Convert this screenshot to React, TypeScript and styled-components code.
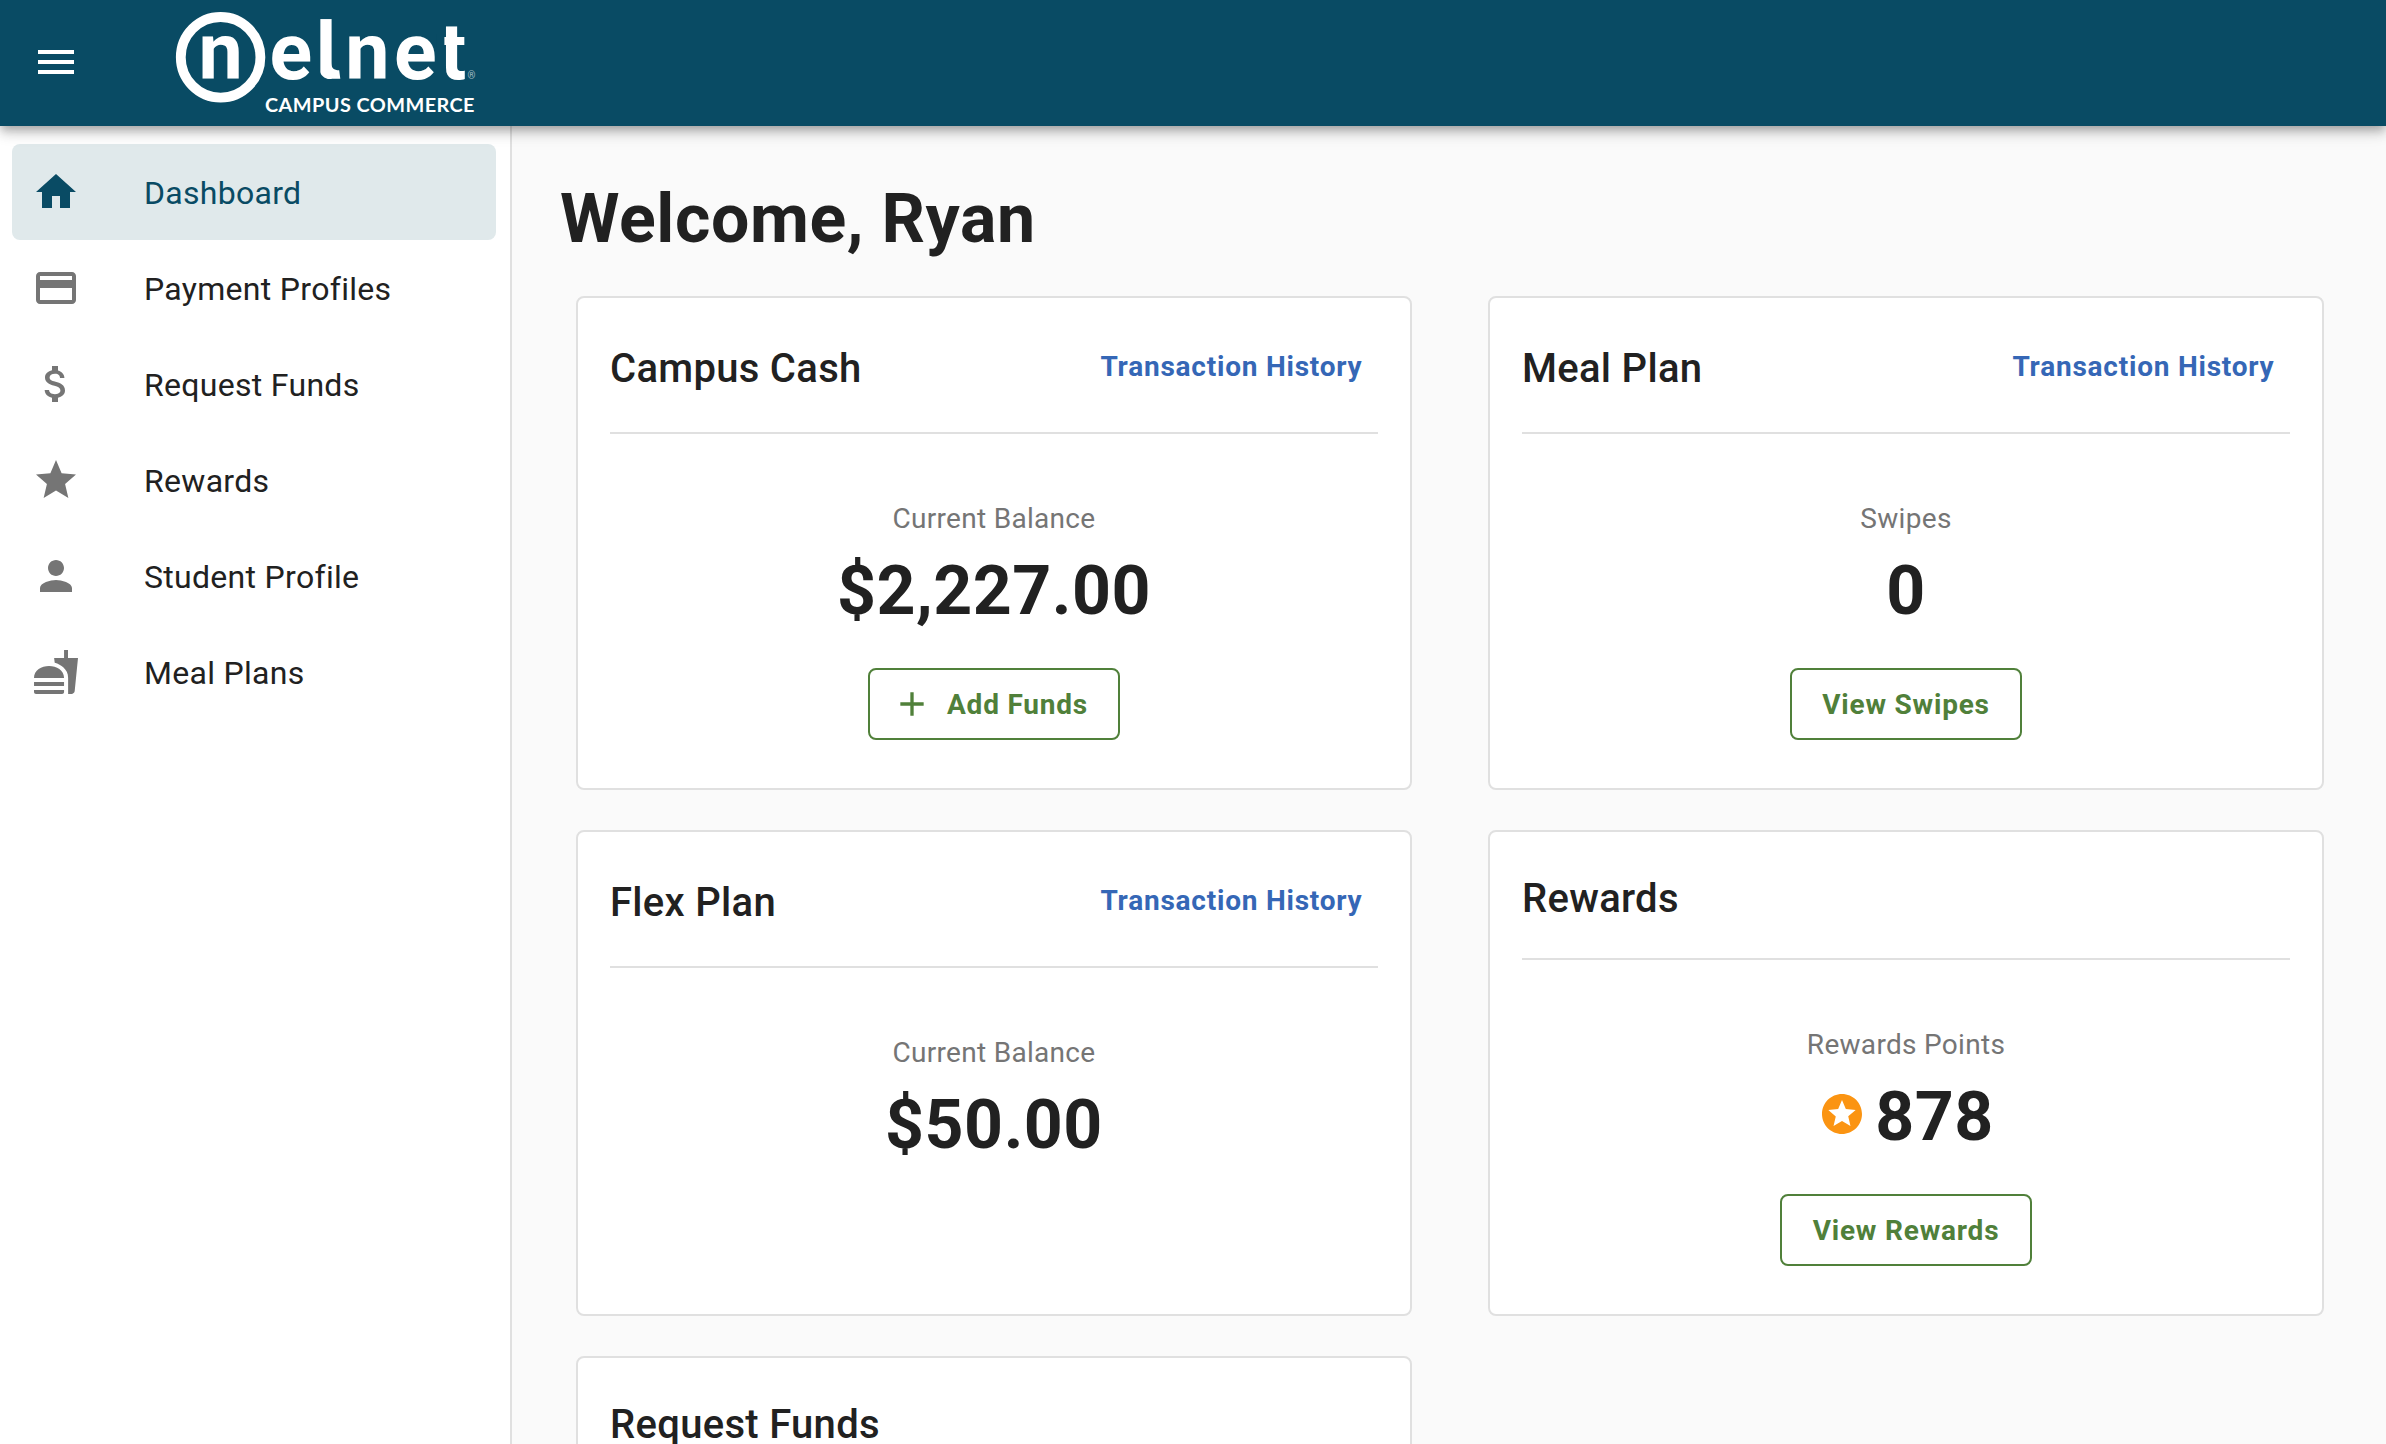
import React from 'react';
import styled, { createGlobalStyle, css } from 'styled-components';
import {
  MdAdd,
  MdAttachMoney,
  MdFastfood,
  MdHome,
  MdMenu,
  MdPayment,
  MdPerson,
  MdStar,
  MdStars,
} from 'react-icons/md';
import type { IconType } from 'react-icons';

const color = {
  brand: '#094b64',
  selected: '#e0e9eb',
  text: '#212121',
  muted: '#757575',
  line: '#e0e0e0',
  page: '#fafafa',
  green: '#50803a',
  blue: '#3567b6',
  orange: '#fb9412',
};

const GlobalStyle = createGlobalStyle`
  *, *::before, *::after { box-sizing: border-box; }
  body {
    margin: 0;
    background: ${color.page};
    color: ${color.text};
    font-family: Roboto, "Liberation Sans", sans-serif;
    -webkit-font-smoothing: antialiased;
  }
  h1, h2, p { margin: 0; }
`;

const Shell = styled.div`
  display: flex;
  flex-direction: column;
  height: 1444px;
  overflow: hidden;
`;

const AppBar = styled.header`
  position: relative;
  z-index: 1;
  flex: none;
  display: flex;
  align-items: flex-start;
  height: 126px;
  padding-left: 32px;
  background: ${color.brand};
  color: #fff;
  box-shadow: 0 4px 8px -2px rgba(0, 0, 0, 0.2), 0 8px 10px rgba(0, 0, 0, 0.14),
    0 2px 20px rgba(0, 0, 0, 0.12);
`;

const MenuButton = styled.button`
  display: flex;
  margin: 38px 84px 0 0;
  padding: 0;
  border: 0;
  background: none;
  color: inherit;
  font-size: 48px;
`;

const Logo = styled.svg`
  display: block;
  width: 340px;
  height: 126px;
  fill: #fff;
`;

const Wordmark = styled.text`
  font: 700 79px Roboto, "Liberation Sans", sans-serif;
`;

const Division = styled.text`
  font: 700 18.4px Lato, "Liberation Sans", sans-serif;
`;

const Registered = styled.text`
  font: 400 10px Roboto, "Liberation Sans", sans-serif;
  opacity: 0.6;
`;

const Body = styled.div`
  flex: 1;
  display: flex;
  min-height: 0;
`;

const Sidebar = styled.nav`
  flex: none;
  width: 512px;
  padding: 18px 14px 0 12px;
  border-right: 2px solid ${color.line};
  background: #fff;
`;

const NavItem = styled.a<{ $active?: boolean }>`
  display: flex;
  align-items: center;
  gap: 64px;
  height: 96px;
  padding-left: 20px;
  border-radius: 8px;
  ${({ $active }) =>
    $active &&
    css`
      background: ${color.selected};
      color: ${color.brand};
    `}
`;

const NavIcon = styled.span<{ $active?: boolean }>`
  display: flex;
  font-size: 48px;
  color: ${({ $active }) => ($active ? color.brand : color.muted)};
`;

const NavLabel = styled.span`
  padding-top: 2px;
  font-size: 32px;
  line-height: 48px;
  letter-spacing: 0.3px;
`;

const Main = styled.main`
  flex: 1;
  padding: 51px 62px 0 48px;
`;

const Heading = styled.h1`
  height: 119px;
  font-size: 68px;
  font-weight: 700;
  line-height: 84px;
  letter-spacing: 0.58px;
`;

const Cards = styled.div`
  display: grid;
  grid-template-columns: 836px 836px;
  grid-template-rows: 494px 486px 494px;
  column-gap: 76px;
  row-gap: 40px;
  margin-left: 16px;
`;

const Card = styled.section`
  padding: 0 32px;
  border: 2px solid ${color.line};
  border-radius: 8px;
  background: #fff;
`;

const CardHeader = styled.div<{ $tall: boolean }>`
  display: flex;
  justify-content: space-between;
  align-items: flex-start;
  height: ${({ $tall }) => ($tall ? 136 : 128)}px;
  padding-top: ${({ $tall }) => ($tall ? 39 : 35)}px;
  border-bottom: 2px solid ${color.line};
`;

const CardTitle = styled.h2`
  font-size: 40px;
  font-weight: 500;
  line-height: 64px;
  letter-spacing: 0.3px;
`;

const LinkButton = styled.a`
  margin-top: 6px;
  padding-right: 15.5px;
  color: ${color.blue};
  font-size: 28px;
  font-weight: 700;
  line-height: 48px;
  letter-spacing: 0.78px;
`;

const CardBody = styled.div`
  display: flex;
  flex-direction: column;
  align-items: center;
  padding-top: 65px;
`;

const Label = styled.p`
  color: ${color.muted};
  font-size: 28px;
  line-height: 40px;
  letter-spacing: 0.3px;
`;

const Amount = styled.p`
  display: flex;
  align-items: center;
  gap: 9px;
  margin: 12px 0 37px;
  font-size: 68px;
  font-weight: 700;
  line-height: 80px;
  letter-spacing: 0.5px;
`;

const PointsIcon = styled(MdStars)`
  margin-bottom: 6px;
  font-size: 48px;
  color: ${color.orange};
`;

const OutlinedButton = styled.button<{ $width: number }>`
  display: flex;
  align-items: center;
  justify-content: center;
  gap: 15px;
  width: ${({ $width }) => $width}px;
  height: 72px;
  padding: 2px 0 0;
  border: 2px solid ${color.green};
  border-radius: 8px;
  background: none;
  color: ${color.green};
  font: 700 28px/48px Roboto, "Liberation Sans", sans-serif;
  letter-spacing: 0.8px;
  white-space: nowrap;
`;

const AddIcon = styled(MdAdd)`
  margin: -2px 0 0 -8px;
  font-size: 40px;
`;

type NavEntry = { label: string; icon: IconType; active?: boolean };

const navigation: NavEntry[] = [
  { label: 'Dashboard', icon: MdHome, active: true },
  { label: 'Payment Profiles', icon: MdPayment },
  { label: 'Request Funds', icon: MdAttachMoney },
  { label: 'Rewards', icon: MdStar },
  { label: 'Student Profile', icon: MdPerson },
  { label: 'Meal Plans', icon: MdFastfood },
];

type Account = {
  title: string;
  history?: boolean;
  label?: string;
  amount?: string;
  points?: boolean;
  action?: { text: string; width: number; add?: boolean };
};

const accounts: Account[] = [
  {
    title: 'Campus Cash',
    history: true,
    label: 'Current Balance',
    amount: '$2,227.00',
    action: { text: 'Add Funds', width: 252, add: true },
  },
  {
    title: 'Meal Plan',
    history: true,
    label: 'Swipes',
    amount: '0',
    action: { text: 'View Swipes', width: 232 },
  },
  { title: 'Flex Plan', history: true, label: 'Current Balance', amount: '$50.00' },
  {
    title: 'Rewards',
    label: 'Rewards Points',
    amount: '878',
    points: true,
    action: { text: 'View Rewards', width: 252 },
  },
  { title: 'Request Funds' },
];

function BrandLogo() {
  return (
    <Logo viewBox="164 0 340 126" role="img" aria-label="nelnet Campus Commerce">
      <ellipse cx="220.6" cy="57.3" rx="39.8" ry="40.3" fill="none" stroke="#fff" strokeWidth="9.8" />
      <Wordmark x="198.6" y="78.7">n</Wordmark>
      <Wordmark x="269.5 315.5 345.2 394 439.5" y="78.7">elnet</Wordmark>
      {/* curved foot under the l, and the flat left side of the t */}
      <path d="M331 62 C331 68 334 70.3 339.2 70.3 L340.3 78.7 H330 Z" />
      <path d="M319 69 C320.5 75.5 324 78.7 330 79.3 H319 Z" fill={color.brand} />
      <rect x="436.4" y="34" width="8" height="13" fill={color.brand} />
      <Registered x="467.5" y="78.5">®</Registered>
      <Division transform="translate(265 111.8) scale(1.08 1)" textLength="194">
        CAMPUS COMMERCE
      </Division>
    </Logo>
  );
}

function AccountCard({ title, history, label, amount, points, action }: Account) {
  return (
    <Card>
      <CardHeader $tall={!!history}>
        <CardTitle>{title}</CardTitle>
        {history && <LinkButton>Transaction History</LinkButton>}
      </CardHeader>
      {label && (
        <CardBody>
          <Label>{label}</Label>
          <Amount>
            {points && <PointsIcon />}
            {amount}
          </Amount>
          {action && (
            <OutlinedButton $width={action.width}>
              {action.add && <AddIcon />}
              {action.text}
            </OutlinedButton>
          )}
        </CardBody>
      )}
    </Card>
  );
}

export default function App() {
  return (
    <Shell>
      <GlobalStyle />
      <AppBar>
        <MenuButton aria-label="Menu">
          <MdMenu />
        </MenuButton>
        <BrandLogo />
      </AppBar>
      <Body>
        <Sidebar>
          {navigation.map(({ label, icon: Icon, active }) => (
            <NavItem key={label} $active={active}>
              <NavIcon $active={active}>
                <Icon />
              </NavIcon>
              <NavLabel>{label}</NavLabel>
            </NavItem>
          ))}
        </Sidebar>
        <Main>
          <Heading>Welcome, Ryan</Heading>
          <Cards>
            {accounts.map((account) => (
              <AccountCard key={account.title} {...account} />
            ))}
          </Cards>
        </Main>
      </Body>
    </Shell>
  );
}
